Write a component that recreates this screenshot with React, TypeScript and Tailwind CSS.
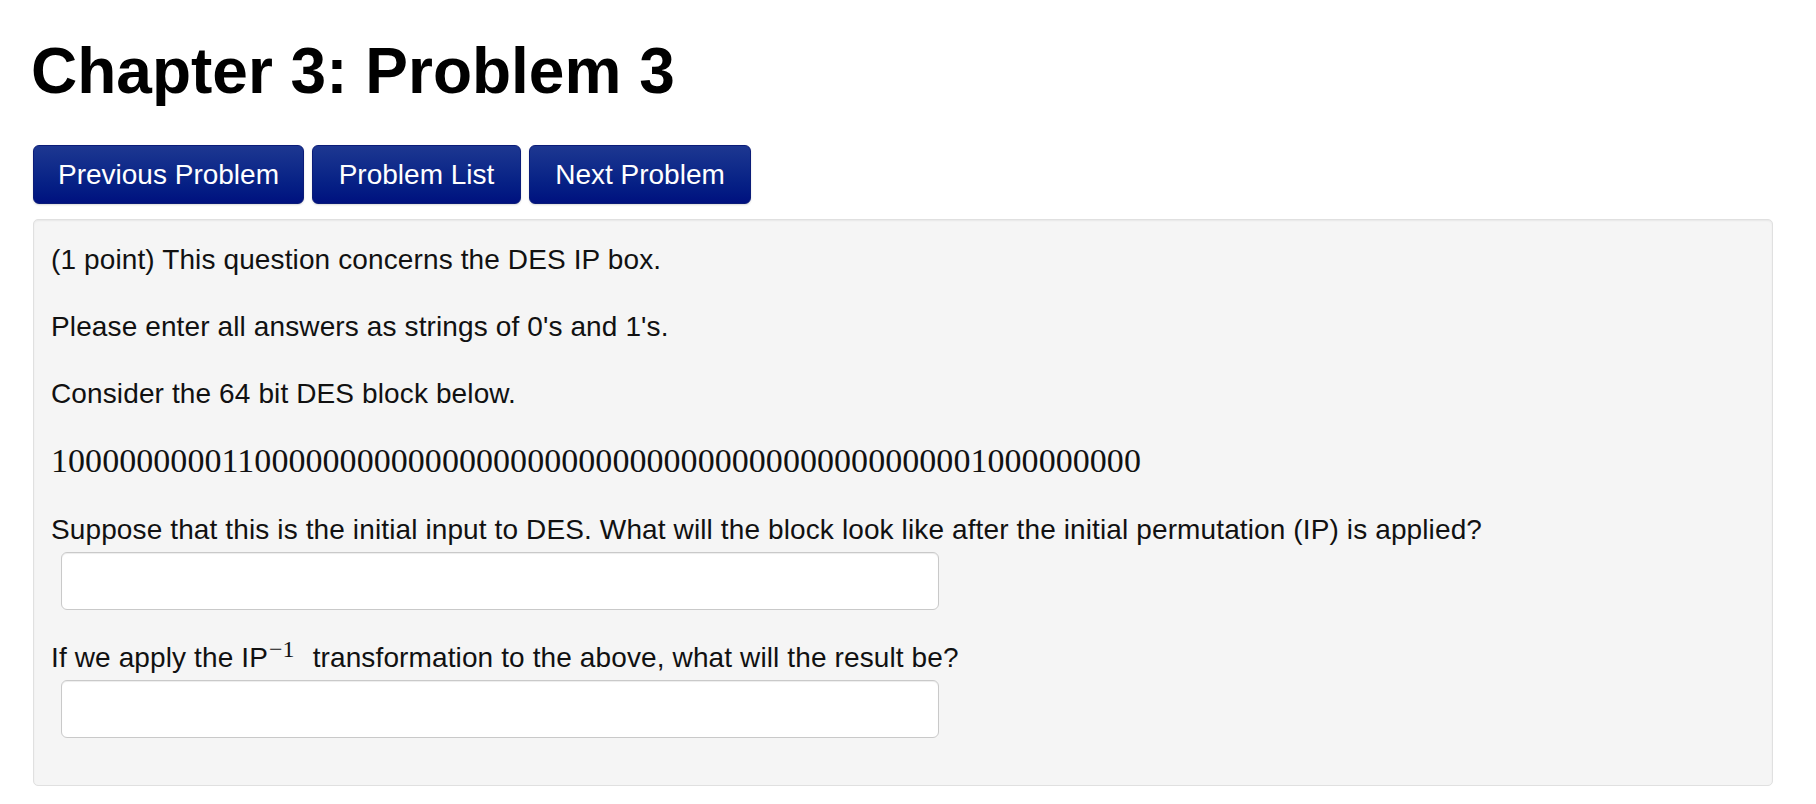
const BITS = '100000000011' + '000000000000000000000000000000000000000000' + '1' + '000000000'

function NavButton({ label, width }: { label: string; width: string }) {
  return (
    <button
      type="button"
      className={`${width} flex h-[59px] items-center justify-center rounded-[6px] border border-[#0b1c78] bg-linear-to-b from-[#1d3791] to-[#00107f] text-[28px] text-white shadow-[0_1px_2px_rgba(0,0,0,0.15)]`}
    >
      {label}
    </button>
  )
}

function AnswerBox() {
  return (
    <input
      type="text"
      className="ml-[10px] mt-[2px] block h-[58px] w-[878px] rounded-[6px] border border-[#c9c9c9] bg-white px-3 text-[28px] shadow-[inset_0_1px_1px_rgba(0,0,0,0.075)] outline-none"
    />
  )
}

export default function App() {
  return (
    <div className="min-h-screen bg-white pl-[33px] font-['Liberation_Sans',Arial,sans-serif] text-[#111]">
      <h1 className="-ml-[2px] mb-[39px] pt-[36px] text-[64px] font-bold leading-[70px] text-black">
        Chapter 3: Problem 3
      </h1>

      <div className="flex gap-[8px]">
        <NavButton label="Previous Problem" width="w-[271px]" />
        <NavButton label="Problem List" width="w-[209px]" />
        <NavButton label="Next Problem" width="w-[222px]" />
      </div>

      <div className="mt-[15px] w-[1740px] rounded-[5px] border border-[#e0e0e0] bg-[#f5f5f5] px-[17px] pb-[47px] pt-[20px] shadow-[inset_0_1px_2px_rgba(0,0,0,0.06)]">
        <div className="text-[28px] leading-[40px] tracking-[0.12px]">
          <p className="mb-[27px]">(1 point) This question concerns the DES IP box.</p>
          <p className="mb-[27px]">Please enter all answers as strings of 0's and 1's.</p>
          <p className="mb-[27px]">Consider the 64 bit DES block below.</p>
          <p className="mb-[29px] font-['Liberation_Serif','Times_New_Roman',serif] text-[34px] tracking-[0.05px]">
            {BITS}
          </p>
          <p>
            Suppose that this is the initial input to DES. What will the block look like after the initial permutation
            (IP) is applied?
          </p>
          <AnswerBox />
          <p className="mt-[28px]">
            If we apply the IP
            <span className="relative -top-[10px] ml-[1px] mr-[10px] font-['Liberation_Serif','Times_New_Roman',serif] text-[24px] leading-none">
              −1
            </span>{' '}
            transformation to the above, what will the result be?
          </p>
          <AnswerBox />
        </div>
      </div>
    </div>
  )
}
